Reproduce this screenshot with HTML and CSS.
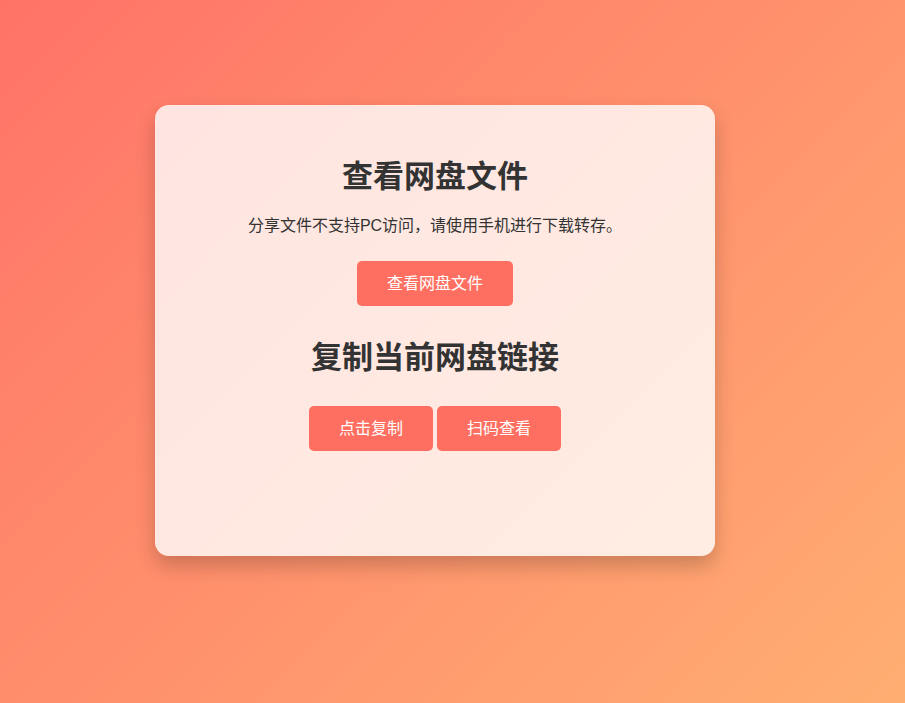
FILE: index.html
```html
<!DOCTYPE html>
<html lang="zh-CN">
<head>
<meta charset="utf-8">
<title>查看网盘文件</title>
<link rel="stylesheet" href="styles.css">
</head>
<body>
<div class="page">
  <div class="card">
    <h1 class="title">查看网盘文件</h1>
    <p class="desc">分享文件不支持PC访问，请使用手机进行下载转存。</p>
    <div class="row row-first">
      <button class="btn">查看网盘文件</button>
    </div>
    <h2 class="title title-second">复制当前网盘链接</h2>
    <div class="row row-second">
      <button class="btn">点击复制</button>
      <button class="btn">扫码查看</button>
    </div>
  </div>
</div>
</body>
</html>
```
FILE: styles.css
```css
html, body {
  margin: 0;
  padding: 0;
  height: 100%;
}
body {
  background: linear-gradient(135deg, #ff7367 0%, #ffae72 100%);
  font-family: "Liberation Sans", "Noto Sans CJK SC", sans-serif;
  color: #333;
}
.page {
  min-height: 703px;
  box-sizing: border-box;
  padding: 105px 0 0 155px;
}
.card {
  width: 560px;
  height: 451px;
  box-sizing: border-box;
  background: rgba(255, 255, 255, 0.8);
  border-radius: 14px;
  box-shadow: 0 10px 20px rgba(0, 0, 0, 0.2);
  padding: 52px 20px 0;
  text-align: center;
}
.title {
  margin: 0;
  font-size: 31px;
  line-height: 40px;
  font-weight: bold;
  color: #333;
}
.title-second {
  margin-top: 32px;
}
.desc {
  margin: 17px 0 0;
  font-size: 16px;
  line-height: 24px;
  color: #333;
}
.row {
  display: flex;
  justify-content: center;
  gap: 4px;
}
.row-first {
  margin-top: 23px;
}
.row-second {
  margin-top: 28px;
}
.btn {
  border: none;
  background: #ff6f61;
  color: #fff;
  font-family: "Liberation Sans", "Noto Sans CJK SC", sans-serif;
  font-size: 16px;
  line-height: 23px;
  padding: 11px 30px;
  border-radius: 5px;
  cursor: pointer;
}
```
